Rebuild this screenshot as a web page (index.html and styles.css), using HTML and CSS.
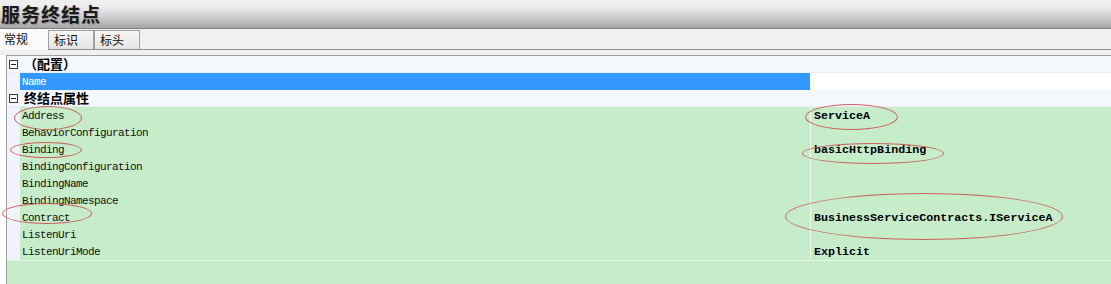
FILE: index.html
```html
<!DOCTYPE html>
<html lang="zh-CN">
<head>
  <meta charset="UTF-8">
  <title>服务终结点</title>
  <link rel="stylesheet" href="styles.css">
</head>
<body>
  <div class="page">
    <div class="header">服务终结点</div>

    <div class="tabs">
      <div class="tab active">常规</div>
      <div class="tab">标识</div>
      <div class="tab">标头</div>
    </div>

    <div class="strip"></div>

    <div class="grid">
      <div class="category">
        <span class="toggle"></span>
        <span class="cat-title">（配置）</span>
      </div>
      <div class="prop selected">
        <div class="gutter"></div>
        <div class="name">Name</div>
        <div class="value"></div>
      </div>

      <div class="category">
        <span class="toggle"></span>
        <span class="cat-title">终结点属性</span>
      </div>
      <div class="prop">
        <div class="gutter"></div>
        <div class="name">Address</div>
        <div class="value">ServiceA</div>
      </div>
      <div class="prop">
        <div class="gutter"></div>
        <div class="name">BehaviorConfiguration</div>
        <div class="value"></div>
      </div>
      <div class="prop">
        <div class="gutter"></div>
        <div class="name">Binding</div>
        <div class="value">basicHttpBinding</div>
      </div>
      <div class="prop">
        <div class="gutter"></div>
        <div class="name">BindingConfiguration</div>
        <div class="value"></div>
      </div>
      <div class="prop">
        <div class="gutter"></div>
        <div class="name">BindingName</div>
        <div class="value"></div>
      </div>
      <div class="prop">
        <div class="gutter"></div>
        <div class="name">BindingNamespace</div>
        <div class="value"></div>
      </div>
      <div class="prop">
        <div class="gutter"></div>
        <div class="name">Contract</div>
        <div class="value">BusinessServiceContracts.IServiceA</div>
      </div>
      <div class="prop">
        <div class="gutter"></div>
        <div class="name">ListenUri</div>
        <div class="value"></div>
      </div>
      <div class="prop">
        <div class="gutter"></div>
        <div class="name">ListenUriMode</div>
        <div class="value">Explicit</div>
      </div>
      <div class="filler"></div>
    </div>

    <!-- hand-drawn red marks over the grid -->
    <div class="mark mark-address"></div>
    <div class="mark mark-binding"></div>
    <div class="mark mark-contract"></div>
    <div class="mark mark-servicea"></div>
    <div class="mark mark-basic"></div>
    <div class="mark mark-contract-value"></div>
  </div>
</body>
</html>
```

FILE: styles.css
```css
* { box-sizing: border-box; }

body {
  margin: 0;
  background: #fff;
  font-family: "Noto Sans CJK SC", "DejaVu Sans", sans-serif;
}

.page {
  position: relative;
  width: 1111px;
  height: 284px;
  overflow: hidden;
  display: flex;
  flex-direction: column;
}

.header {
  height: 29px;
  padding: 0 0 0 1px;
  font-size: 19px;
  font-weight: bold;
  line-height: 27px;
  color: #1a1a1a;
  text-shadow: 1px 1px 1px rgba(0, 0, 0, 0.25);
  background: linear-gradient(#f0f0f0 0%, #ececec 25%, #cfcfcf 60%, #a6a6a6 100%);
  border-bottom: 1px solid #808080;
  letter-spacing: 1px;
}

.tabs {
  height: 21px;
  display: flex;
  align-items: flex-end;
  background: #f0f0f0;
  border-bottom: 1px solid #909090;
}

.tab {
  width: 46px;
  height: 19px;
  font-size: 12px;
  line-height: 18px;
  padding-left: 5px;
  color: #111;
  border: 1px solid #a0a0a0;
  border-bottom: none;
  background: linear-gradient(#f6f6f6, #e4e4e4);
}

.tab.active {
  width: 48px;
  height: 21px;
  padding-left: 4px;
  line-height: 20px;
  background: #fbfbfb;
  border: none;
  margin-bottom: -1px;
}

.strip {
  height: 5px;
  background: #f0f0f0;
}

.grid {
  flex: 1;
  margin-left: 6px;
  border-top: 1px solid #a0a0a0;
  border-left: 1px solid #a0a0a0;
  display: flex;
  flex-direction: column;
  background: #f4f7fc;
}

.category {
  height: 17px;
  display: flex;
  align-items: center;
  background: #f4f7fc;
  border-bottom: 1px solid #e9edf5;
}

.toggle {
  position: relative;
  width: 9px;
  height: 9px;
  margin: 0 9px 0 2px;
  border: 1px solid #3a3a3a;
  background: #fff;
}

.toggle::after {
  content: "";
  position: absolute;
  left: 1px;
  top: 3px;
  width: 5px;
  height: 1px;
  background: #222;
}

.cat-title {
  font-size: 13px;
  font-weight: bold;
  color: #000;
  line-height: 16px;
  margin-left: -3px;
}

.prop {
  height: 17px;
  display: grid;
  grid-template-columns: 13px 790px 1fr;
}

.gutter {
  background: #f0f3fa;
}

.name,
.value {
  font-family: "Liberation Mono", "DejaVu Sans Mono", monospace;
  line-height: 16px;
  padding-top: 1px;
  white-space: nowrap;
  background: #c7ecca;
  border-bottom: 1px solid #e4f5e6;
}

.name {
  font-size: 11px;
  letter-spacing: -0.6px;
  padding-left: 2px;
  color: #111;
}

.value {
  font-size: 11.7px;
  font-weight: bold;
  padding-left: 3px;
  color: #000;
  border-left: 1px solid #eef9ef;
}

.selected .name {
  background: #3399ff;
  color: #fff;
  border-bottom: 1px solid #f4f7fc;
}

.selected .value {
  background: #fff;
  border-left: 1px solid #f4f7fc;
  border-bottom: 1px solid #f4f7fc;
}

.selected .gutter {
  border-bottom: 1px solid #f4f7fc;
}

.filler {
  flex: 1;
  background: #c7ecca;
  border-top: 1px solid #e4f5e6;
}

.mark {
  position: absolute;
  border: 1px solid rgba(205, 70, 70, 0.85);
  border-radius: 50%;
}

.mark-address { left: 14px; top: 106px; width: 68px; height: 24px; }
.mark-binding { left: 10px; top: 142px; width: 72px; height: 16px; }
.mark-contract { left: 2px; top: 203px; width: 90px; height: 21px; }
.mark-servicea { left: 805px; top: 104px; width: 93px; height: 26px; }
.mark-basic { left: 802px; top: 143px; width: 142px; height: 21px; }
.mark-contract-value { left: 785px; top: 193px; width: 278px; height: 47px; }
```
